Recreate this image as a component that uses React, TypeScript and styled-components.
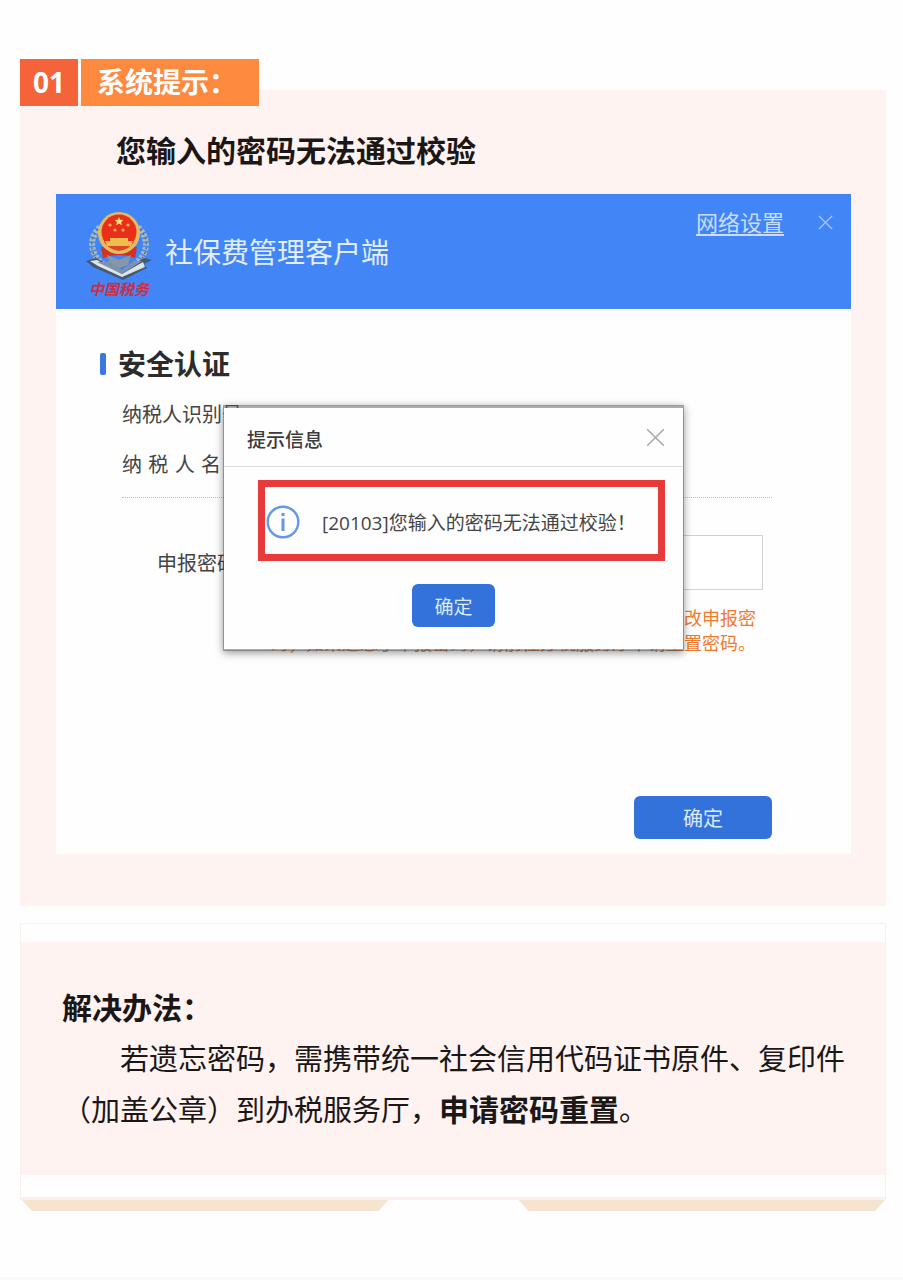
import React from "react";
import styled, { createGlobalStyle } from "styled-components";

const GlobalStyle = createGlobalStyle`
  *, *::before, *::after { box-sizing: border-box; }
  body {
    margin: 0;
    background: #fefefe;
    color: #1c1717;
    font-family: "Open Sans", "Noto Sans CJK SC", sans-serif;
  }
  h1, h2, h3, p { margin: 0; }
  button, input { font-family: inherit; }
`;

const Page = styled.main`
  padding: 59px 17px 0 20px;
`;

const TagRow = styled.h1`
  position: relative;
  display: flex;
  gap: 3px;
  margin-bottom: -16px;
  font-size: 28px;
  font-weight: 700;
  line-height: 47px;
  color: #fff;
`;

const TagNumber = styled.span`
  width: 58px;
  background: #f4633a;
  text-align: center;
`;

const TagLabel = styled.span`
  width: 178px;
  padding-left: 16px;
  background: #fe8a3f;
  white-space: nowrap;
`;

const Panel = styled.section`
  background: #fef3f1;
`;

const ProblemPanel = styled(Panel)`
  padding: 37px 35px 52px 36px;
`;

const ProblemTitle = styled.h2`
  margin-bottom: 19px;
  font-size: 30px;
  line-height: 48px;
  text-indent: 2em;
`;

const Client = styled.div`
  position: relative;
  background: #fefefe;
  color: #444;
`;

const ClientHeader = styled.header`
  display: flex;
  align-items: center;
  height: 115px;
  padding: 0 18px 0 30px;
  background: #4285f6;
  color: #e3eeff;
`;

const Logo = styled.div`
  display: flex;
  flex-direction: column;
  align-items: center;
  width: 66px;
  margin-right: 13px;
  padding-top: 5px;
`;

const LogoCaption = styled.span`
  color: #c73048;
  font-size: 15px;
  font-style: italic;
  font-weight: 700;
  line-height: 16px;
`;

const ClientName = styled.span`
  flex: 1;
  font-size: 28px;
  line-height: 36px;
`;

const HeaderTools = styled.div`
  display: flex;
  align-items: center;
  align-self: flex-start;
  gap: 34px;
  padding-top: 15px;
`;

const NetworkLink = styled.a`
  color: #c9deff;
  font-size: 22px;
  line-height: 26px;
  text-underline-offset: 3px;
`;

const CloseButton = styled.button<{ $tone: string }>`
  display: flex;
  padding: 0;
  border: 0;
  background: none;
  color: ${(p) => p.$tone};
`;

const ClientBody = styled.form`
  padding: 41px 79px 15px 44px;
`;

const SectionTitle = styled.h3`
  display: flex;
  align-items: center;
  gap: 12px;
  margin-bottom: 12px;
  color: #2c2c2c;
  font-size: 28px;
  line-height: 28px;

  &::before {
    content: "";
    width: 6px;
    height: 22px;
    border-radius: 2px;
    background: #3a78e0;
  }
`;

const Fields = styled.div`
  padding-left: 22px;
`;

const InfoRow = styled.div`
  font-size: 20px;
  line-height: 50px;
  white-space: nowrap;
`;

const SpacedLabel = styled.span`
  font-family: "DejaVu Sans", "Noto Sans CJK SC", sans-serif;
`;

const Divider = styled.hr`
  margin: 7px 0 37px;
  border: 0;
  border-top: 1px dotted #bbb;
`;

const PasswordRow = styled.div`
  display: flex;
  align-items: center;
  gap: 24px;
  padding: 0 9px 0 35px;
  font-size: 20px;
`;

const PasswordInput = styled.input`
  flex: 1;
  min-width: 0;
  height: 55px;
  border: 1px solid #ccd2d6;
  background: #fff;
`;

const Hint = styled.p`
  width: 486px;
  max-width: 100%;
  margin: 16px 16px 0 auto;
  color: #f27a2c;
  font-size: 18px;
  line-height: 25px;
`;

const PrimaryButton = styled.button<{ $width: number; $size: number }>`
  display: block;
  width: ${(p) => p.$width}px;
  height: 43px;
  padding: 0;
  border: 0;
  border-radius: 6px;
  background: #3372db;
  color: #dce9ff;
  font-size: ${(p) => p.$size}px;
`;

const Actions = styled.div`
  display: flex;
  justify-content: flex-end;
  padding-top: 140px;
`;

const Modal = styled.div`
  position: absolute;
  top: 211px;
  left: 21%;
  width: 58%;
  height: 246px;
  border: 1px solid rgba(90, 90, 90, 0.5);
  border-width: 3px 1px 2px;
  background: #fefefe;
  background-clip: padding-box;
  box-shadow: 0 2px 8px rgba(0, 0, 0, 0.4);
`;

const ModalHeader = styled.div`
  display: flex;
  align-items: center;
  justify-content: space-between;
  height: 59px;
  padding: 0 18px 0 23px;
  border-bottom: 1px solid #dcdfe2;
`;

const ModalTitle = styled.h3`
  padding-top: 4px;
  color: #3c3c3c;
  font-size: 19px;
  font-weight: 500;
`;

const Alert = styled.div`
  display: flex;
  align-items: center;
  gap: 22px;
  height: 81px;
  margin: 13px 18px 23px 34px;
  padding: 2px 0 0 1px;
  border: 7px solid #e63a3b;
  font-size: 19px;
  white-space: nowrap;
`;

const ModalActions = styled.div`
  display: flex;
  justify-content: center;
`;

const SolutionFrame = styled.div`
  margin-top: 17px;
  padding: 18px 0 22px;
  border: 1px solid #fdeeec;
  border-bottom: 3px solid #fdeeec;
`;

const SolutionPanel = styled(Panel)`
  padding: 41px 40px 40px 41px;
`;

const SolutionTitle = styled.h2`
  font-size: 30px;
  line-height: 50px;
`;

const SolutionText = styled.p`
  font-size: 29px;
  line-height: 51px;
  text-indent: 2em;

  strong { font-size: 30px; line-height: 50px; }
`;

const FootBars = styled.div`
  display: flex;
  justify-content: space-between;
  padding: 0 1px 0 2px;
`;

const FootBar = styled.div`
  width: calc(50% - 65px);
  height: 11px;
  background: #f4e4d0;
  clip-path: polygon(0 0, 100% 0, calc(100% - 10px) 100%, 10px 100%);
`;

const PageEnd = styled.div`
  height: 3px;
  margin-top: 66px;
  background: #f8f9f9;
`;

function Cross({ size, width }: { size: number; width: number }) {
  return (
    <svg width={size} height={size} viewBox="0 0 16 16" fill="none" stroke="currentColor" strokeWidth={width}>
      <path d="M1 1 15 15M15 1 1 15" />
    </svg>
  );
}

function InfoIcon() {
  return (
    <svg width="34" height="34" viewBox="0 0 34 34" fill="none" stroke="#6397e8" strokeWidth="2.4">
      <circle cx="17" cy="17" r="15.3" />
      <path d="M17 13.5V26M17 8V11" strokeWidth="3" />
    </svg>
  );
}

function Emblem() {
  return (
    <svg width="66" height="70" viewBox="0 0 66 70">
      <g fill="none" stroke="#a9b9b5" strokeWidth="6" strokeDasharray="3 1.5">
        <path d="M14 16C2 28 4 43 18 54" />
        <path d="M52 16C64 28 62 43 48 54" />
      </g>
      <g fill="none" stroke="#53677c" strokeWidth="1.4" strokeDasharray="2 3">
        <path d="M12 18C2 29 4 44 16 54" />
        <path d="M54 18C64 29 62 44 50 54" />
      </g>
      <path d="M15 36 17 47Q33 41 49 47L51 36Z" fill="#d43126" />
      <path d="M21 44 33 49 45 44 42 54 33 57 24 54Z" fill="#8797a8" />
      <path d="M0 50 10 47 36 61 58 47 66 49 58 53 61 57 37 69 7 56Z" fill="#455970" />
      <path d="M4 50 11 49 36 63 57 51 59 56 36 66 12 55Z" fill="#dce5e8" />
      <path d="M11 51 24 51 36 59 48 50 56 50 36 63Z" fill="#7d91ab" />
      <circle cx="33" cy="22" r="21" fill="#e2bc62" />
      <circle cx="33" cy="21" r="17.5" fill="#e92f19" />
      <path d="M18 31H48Q44 38 33 40 22 38 18 31Z" fill="#d94a20" />
      <path d="M24 27H42V30H47L45 35H21L19 30H24Z" fill="#efbd4d" />
      <path d="m33 6 1.3 2.8 3.1.3-2.3 2.1.7 3-2.8-1.6-2.8 1.6.7-3-2.3-2.1 3.1-.3Z" fill="#ffe27a" />
      <g fill="#ffb34f">
        <circle cx="24" cy="14" r="1.6" />
        <circle cx="42" cy="14" r="1.6" />
        <circle cx="29" cy="19" r="1.6" />
        <circle cx="37" cy="19" r="1.6" />
      </g>
    </svg>
  );
}

export default function App() {
  return (
    <>
      <GlobalStyle />
      <Page>
        <TagRow>
          <TagNumber>01</TagNumber>
          <TagLabel>系统提示：</TagLabel>
        </TagRow>

        <ProblemPanel>
          <ProblemTitle>您输入的密码无法通过校验</ProblemTitle>
          <Client>
            <ClientHeader>
              <Logo>
                <Emblem />
                <LogoCaption>中国税务</LogoCaption>
              </Logo>
              <ClientName>社保费管理客户端</ClientName>
              <HeaderTools>
                <NetworkLink href="#network">网络设置</NetworkLink>
                <CloseButton type="button" aria-label="关闭窗口" $tone="#a9c6f5">
                  <Cross size={15} width={1.4} />
                </CloseButton>
              </HeaderTools>
            </ClientHeader>

            <ClientBody onSubmit={(e: React.FormEvent) => e.preventDefault()}>
              <SectionTitle>安全认证</SectionTitle>
              <Fields>
                <InfoRow>纳税人识别号：11010120020101072000</InfoRow>
                <InfoRow>
                  <SpacedLabel>纳 税 人 名 称</SpacedLabel>
                </InfoRow>
                <Divider />
                <PasswordRow>
                  <label htmlFor="password">申报密码</label>
                  <PasswordInput id="password" type="password" />
                </PasswordRow>
                <Hint>初次登录请使用初始密码，登录后请尽快在客户端修改申报密码；如果遗忘了申报密码，请前往办税服务厅申请重置密码。</Hint>
              </Fields>
              <Actions>
                <PrimaryButton type="submit" $width={138} $size={20}>确定</PrimaryButton>
              </Actions>
            </ClientBody>

            <Modal role="dialog" aria-labelledby="modal-title">
              <ModalHeader>
                <ModalTitle id="modal-title">提示信息</ModalTitle>
                <CloseButton type="button" aria-label="关闭提示" $tone="#a8a8a8">
                  <Cross size={19} width={1.3} />
                </CloseButton>
              </ModalHeader>
              <Alert>
                <InfoIcon />
                <span>[20103]您输入的密码无法通过校验！</span>
              </Alert>
              <ModalActions>
                <PrimaryButton type="button" $width={83} $size={19}>确定</PrimaryButton>
              </ModalActions>
            </Modal>
          </Client>
        </ProblemPanel>

        <SolutionFrame>
          <SolutionPanel>
            <SolutionTitle>解决办法：</SolutionTitle>
            <SolutionText>
              若遗忘密码，需携带统一社会信用代码证书原件、复印件（加盖公章）到办税服务厅，<strong>申请密码重置</strong>。
            </SolutionText>
          </SolutionPanel>
        </SolutionFrame>
        <FootBars>
          <FootBar />
          <FootBar />
        </FootBars>
      </Page>
      <PageEnd />
    </>
  );
}
